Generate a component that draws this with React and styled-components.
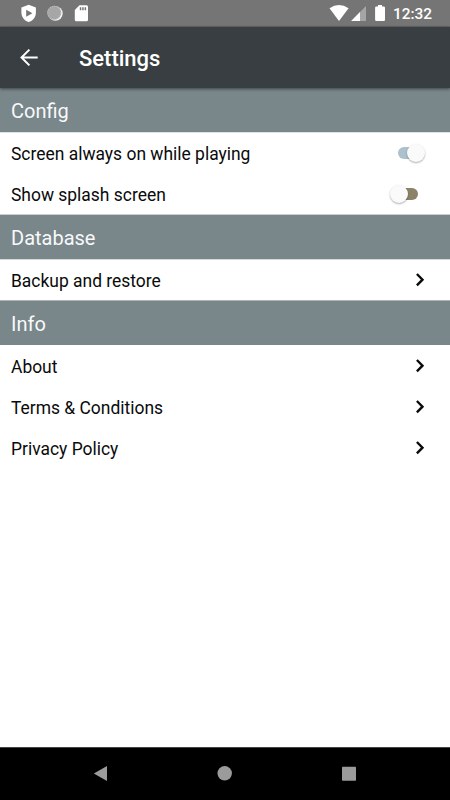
import React from "react";
import styled, { createGlobalStyle } from "styled-components";

const GlobalStyle = createGlobalStyle`
  * { box-sizing: border-box; }
  body { margin: 0; background: #fff; }
`;

const Screen = styled.div`
  width: 450px;
  height: 800px;
  display: flex;
  flex-direction: column;
  overflow: hidden;
  background: #fff;
  font-family: Roboto, "Liberation Sans", sans-serif;
  color: #0a0a0a;
`;

const StatusBar = styled.div`
  height: 27px;
  flex: none;
  display: flex;
  justify-content: space-between;
  background: #757575;
  border-bottom: 1px solid #656767;
  color: #fff;
`;

const StatusGroup = styled.div`
  display: flex;
`;

const Clock = styled.span`
  width: 57px;
  font-size: 15.4px;
  font-weight: 500;
  line-height: 28px;
`;

const Toolbar = styled.header`
  height: 61px;
  flex: none;
  display: flex;
  align-items: center;
  padding-left: 18px;
  gap: 39px;
  background: #393e42;
  color: #fff;
  box-shadow: 0 1px 3px rgba(0, 0, 0, 0.5);
  z-index: 1;
`;

const BackButton = styled.button`
  width: 22px;
  height: 22px;
  padding: 0;
  border: 0;
  background: none;
  color: inherit;
  display: flex;
`;

const Title = styled.h1`
  margin: 2px 0 0;
  font-size: 22px;
  font-weight: 500;
  line-height: 28px;
`;

const Content = styled.main`
  flex: 1;
`;

const SectionHeader = styled.h2`
  height: 44px;
  margin: 0;
  padding: 1px 0 0 11px;
  background: #79868a;
  color: #f7f9fa;
  font-size: 20px;
  font-weight: 400;
  line-height: 44px;
`;

const Row = styled.div`
  height: ${(p) => p.$height || 41}px;
  padding: 0 25px 0 11px;
  display: flex;
  align-items: center;
  justify-content: space-between;
  border-bottom: ${(p) => (p.$edge ? `1px solid ${p.$edge}` : "0")};
  box-shadow: ${(p) => (p.$topEdge ? `inset 0 1px ${p.$topEdge}` : "none")};
`;

const Label = styled.span`
  font-size: 17.45px;
  line-height: 24px;
  padding-top: 2px;
`;

const Switch = styled.div`
  width: 34.6px;
  height: 20px;
  display: flex;
  align-items: center;
  justify-content: ${(p) => (p.$on ? "flex-end" : "flex-start")};
`;

const Track = styled.div`
  width: 21px;
  height: 12px;
  border-radius: 6px;
  display: flex;
  align-items: center;
  justify-content: ${(p) => (p.$on ? "flex-end" : "flex-start")};
  background: ${(p) => (p.$on ? "#adc1cd" : "#8b8267")};
  margin: ${(p) => (p.$on ? "0 6px 0 0" : "0 0 0 7px")};
`;

const Thumb = styled.div`
  width: 18px;
  height: 18px;
  flex: none;
  border-radius: 50%;
  background: #fafafa;
  box-shadow: 0 1px 2px rgba(0, 0, 0, 0.32);
  margin: ${(p) => (p.$on ? "0 -6px 0 0" : "0 0 0 -7px")};
`;

const NavBar = styled.nav`
  height: 53px;
  flex: none;
  display: flex;
  justify-content: center;
  gap: 100px;
  background: #000;
  border-top: 1px solid #444;
`;

function StatusIcons() {
  return (
    <svg width="110" height="26" viewBox="0 0 110 26">
      <path d="M28.700 4.700l7.200 2.800v5.200c0 4.200-3 8.100-7.200 9.400-4.200-1.300-7.300-5.200-7.300-9.400V7.500z" fill="#fff" />
      <path d="M26.200 9.700v7l6.200-3.500z" fill="#757575" />
      <circle cx="55.400" cy="13.500" r="7.300" fill="#f2f2f2" />
      <circle cx="54.200" cy="12.800" r="7" fill="#a6a6a6" />
      <circle cx="54.200" cy="12.800" r="6.500" fill="none" stroke="#cacaca" strokeWidth="1" strokeDasharray="1 1.300" />
      <path d="M79.500 5.300h7q1.500 0 1.500 1.500v12.900q0 1.500-1.500 1.500H76.300q-1.500 0-1.500-1.500V10z" fill="#fff" />
      <path d="M79.800 7.200h1.500v3h-1.500zM82.200 7.200h1.500v3h-1.500zM84.600 7.200h1.500v3h-1.500z" fill="#757575" />
    </svg>
  );
}

function SignalIcons() {
  return (
    <svg width="66" height="26" viewBox="327 0 66 26">
      <path d="M329.500 8.300Q339 1.800 348.600 8.300L339 20.900z" fill="#fff" />
      <path d="M366 6v15h-14.800z" fill="#a5a5a5" />
      <path d="M360 12v9h-8.800z" fill="#fff" />
      <path d="M378 5h4v1.600h1.800q1.200 0 1.200 1.200v12q0 1.200-1.200 1.200h-7.500q-1.200 0-1.200-1.200v-12q0-1.200 1.200-1.200H378z" fill="#fff" />
    </svg>
  );
}

function BackArrow() {
  return (
    <svg width="22" height="22" viewBox="0 0 22 22" fill="none" stroke="currentColor" strokeWidth="2">
      <path d="M19.700 10.500H4M11.400 2.600L3.500 10.500l7.900 7.900" />
    </svg>
  );
}

function Chevron() {
  return (
    <svg width="12" height="16" viewBox="0 0 12 16" fill="none" stroke="#0a0a0a" strokeWidth="2.400">
      <path d="M3.900 2L9.500 7.700l-5.600 5.700" />
    </svg>
  );
}

function Toggle({ on }) {
  return (
    <Switch $on={on} role="switch" aria-checked={on}>
      <Track $on={on}>
        <Thumb $on={on} />
      </Track>
    </Switch>
  );
}

export default function App() {
  return (
    <>
      <GlobalStyle />
      <Screen>
        <StatusBar>
          <StatusIcons />
          <StatusGroup>
            <SignalIcons />
            <Clock>12:32</Clock>
          </StatusGroup>
        </StatusBar>
        <Toolbar>
          <BackButton aria-label="Back"><BackArrow /></BackButton>
          <Title>Settings</Title>
        </Toolbar>
        <Content>
          <SectionHeader>Config</SectionHeader>
          <Row $topEdge="#dfe2e3">
            <Label>Screen always on while playing</Label>
            <Toggle on />
          </Row>
          <Row $height={42} $edge="#c9cfd1">
            <Label>Show splash screen</Label>
            <Toggle on={false} />
          </Row>
          <SectionHeader>Database</SectionHeader>
          <Row $height={42} $edge="#adb4b7" $topEdge="#d5d9da">
            <Label>Backup and restore</Label>
            <Chevron />
          </Row>
          <SectionHeader>Info</SectionHeader>
          <Row>
            <Label>About</Label>
            <Chevron />
          </Row>
          <Row>
            <Label>Terms &amp; Conditions</Label>
            <Chevron />
          </Row>
          <Row>
            <Label>Privacy Policy</Label>
            <Chevron />
          </Row>
        </Content>
        <NavBar>
          <svg width="24" height="52" viewBox="89 748 24 52"><path d="M107 766v15l-13.200-7.500z" fill="#9b9b9b" /></svg>
          <svg width="24" height="52" viewBox="213 748 24 52"><circle cx="224.700" cy="773.300" r="7.200" fill="#9b9b9b" /></svg>
          <svg width="24" height="52" viewBox="337 748 24 52"><rect x="342" y="766.700" width="14" height="14" rx=".7" fill="#9b9b9b" /></svg>
        </NavBar>
      </Screen>
    </>
  );
}
